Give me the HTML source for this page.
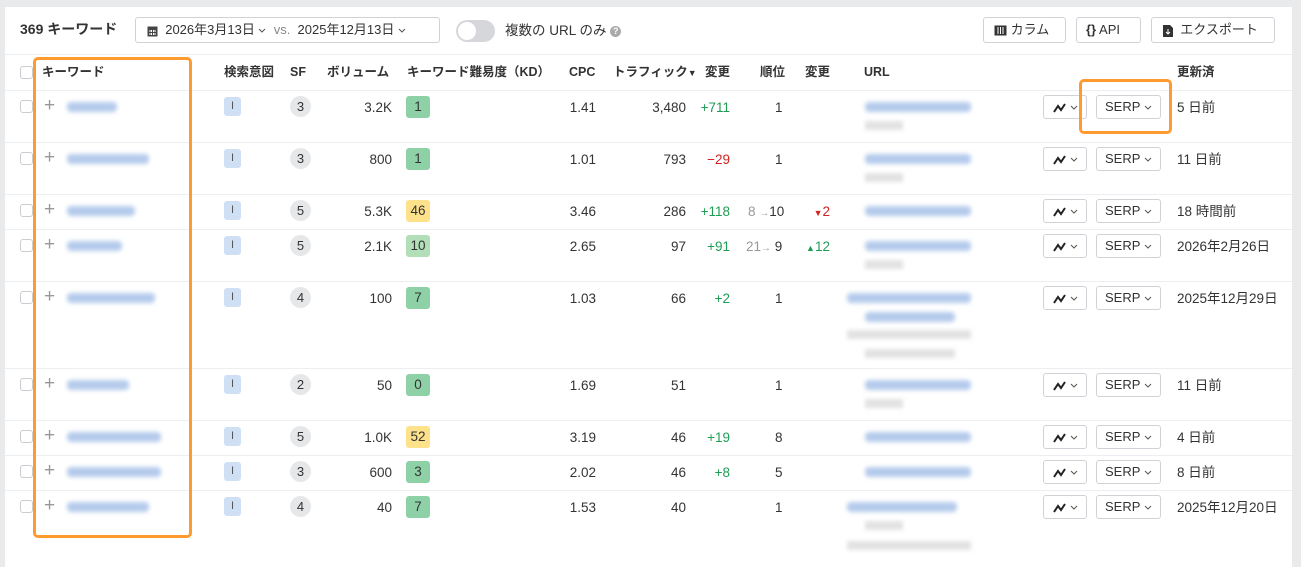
<!DOCTYPE html>
<html><head><meta charset="utf-8">
<style>
*{box-sizing:border-box;margin:0;padding:0}
body{width:1301px;height:550px;background:#e9eaec;font-family:"Liberation Sans","Noto Sans CJK JP",sans-serif;font-size:13px;color:#333;position:relative;overflow:hidden}
.panel{position:absolute;left:5px;top:7px;width:1287px;height:560px;background:#fff}
.a{position:absolute;white-space:nowrap;line-height:17px}
.btn{position:absolute;border:1px solid #cfd2d6;border-radius:3px;background:#fff;height:26px;line-height:24px;font-size:13px;color:#333;white-space:nowrap}
.hl{position:absolute;left:0;width:1287px;height:1px;background:#eceef0}
.th{position:absolute;top:64px;font-weight:bold;font-size:12.5px;color:#333;line-height:17px;white-space:nowrap}
.row{position:absolute;left:0;width:1301px}
.cb{position:absolute;left:20px;top:10px;width:13px;height:13px;border:1px solid #c9ccd0;border-radius:3px;background:#fff}
.plus{position:absolute;left:44px;top:1px;font-size:19px;color:#999;font-weight:300;line-height:30px}
.kw{position:absolute;left:67px;top:12px;height:10px;background:#b5cbec;filter:blur(2px);border-radius:4px}
.it{position:absolute;left:224px;top:7px;width:17px;height:19px;background:#cfe0f5;border-radius:3px;text-align:center;line-height:19px;font-size:11px;color:#555}
.sf{position:absolute;left:290px;top:6px;width:21px;height:21px;border-radius:50%;background:#e6e7e9;text-align:center;line-height:21px;font-size:13px}
.c{position:absolute;top:9px;line-height:17px;font-size:13.5px;white-space:nowrap}
.kd{position:absolute;left:406px;top:6px;height:22px;min-width:24px;padding:0 4px;border-radius:3px;text-align:center;line-height:22px;font-size:13.5px}
.g{background:#8fd1a6}.lg{background:#b3dfb8}.y{background:#fde18b}
.url{position:absolute;left:865px;top:12px;width:106px;height:10px;background:#b5cbec;filter:blur(2px);border-radius:4px}
.url2{position:absolute;left:865px;top:31px;width:38px;height:9px;background:#e2e2e2;filter:blur(2px)}
.ch{position:absolute;left:1043px;top:5px;width:44px;height:24px;border:1px solid #cfd2d6;border-radius:3px;line-height:22px;padding-left:9px}
.sp{position:absolute;left:1096px;top:5px;width:65px;height:24px;border:1px solid #cfd2d6;border-radius:3px;font-size:13px;line-height:22px;padding-left:8px;white-space:nowrap}
.up{position:absolute;left:1177px;top:9px;line-height:17px;font-size:13.5px;white-space:nowrap}
.grn{color:#1f9d55}.red{color:#d32222}
.ob{position:absolute;border:3px solid #ff9a2e;border-radius:5px}
svg{vertical-align:middle}
</style></head><body>
<div class="panel"></div>
<div class="a" style="left:20px;top:21px;font-weight:bold;font-size:14px">369 キーワード</div>
<div class="btn" style="left:135px;top:17px;width:305px;padding-left:11px"><svg width="11" height="12"><rect x="0.5" y="1.5" width="10" height="10" fill="#444"/><rect x="2" y="5" width="7" height="5" fill="#fff"/><path d="M3 5v5M5.5 5v5M8 5v5M2 7.5h7" stroke="#444"/></svg>&nbsp; 2026年3月13日 <svg width="8" height="5"><path d="M1 1l3 3 3-3" stroke="#555" fill="none"/></svg>&nbsp; <span style="color:#888">vs.</span>&nbsp; 2025年12月13日 <svg width="8" height="5"><path d="M1 1l3 3 3-3" stroke="#555" fill="none"/></svg></div>
<div class="a" style="left:456px;top:20px;width:39px;height:22px;border-radius:11px;background:#d5d7da"><div style="position:absolute;left:2px;top:2px;width:18px;height:18px;border-radius:50%;background:#fff"></div></div>
<div class="a" style="left:505px;top:22px;font-size:13.5px">複数の URL のみ <span style="display:inline-block;width:11px;height:11px;border-radius:50%;background:#aaa;color:#fff;font-size:9px;text-align:center;line-height:11px;font-weight:bold;vertical-align:1px">?</span></div>
<div class="btn" style="left:983px;top:17px;width:83px;padding-left:10px"><svg width="13" height="11"><rect x="0.5" y="0.5" width="12" height="10" fill="#333"/><path d="M4 2v7M6.5 2v7M9 2v7" stroke="#fff"/></svg> カラム</div>
<div class="btn" style="left:1076px;top:17px;width:65px;padding-left:9px"><b>{}</b> API</div>
<div class="btn" style="left:1151px;top:17px;width:124px;padding-left:11px"><svg width="10" height="12"><path d="M0 0h7l3 3v9H0z" fill="#333"/><path d="M5 4v5M3 7l2 2 2-2" stroke="#fff" fill="none"/></svg>&nbsp; エクスポート</div>
<div class="hl" style="left:5px;top:54px"></div>

<div class="a" style="left:20px;top:66px;width:13px;height:13px;border:1px solid #c9ccd0;border-radius:3px"></div>
<div class="th" style="left:42px">キーワード</div>
<div class="th" style="left:224px">検索意図</div>
<div class="th" style="left:290px">SF</div>
<div class="th" style="left:327px">ボリューム</div>
<div class="th" style="left:407px">キーワード難易度（KD）</div>
<div class="th" style="left:569px">CPC</div>
<div class="th" style="left:613px">トラフィック<span style="font-size:9px">▼</span></div>
<div class="th" style="left:705px">変更</div>
<div class="th" style="left:760px">順位</div>
<div class="th" style="left:805px">変更</div>
<div class="th" style="left:864px">URL</div>
<div class="th" style="left:1177px">更新済</div>
<div class="hl" style="left:5px;top:90px"></div>

<div class="row" style="top:90px"><div class="cb"></div><div class="plus">+</div><div class="kw" style="width:50px"></div><div class="it">I</div><div class="sf">3</div><div class="c" style="right:909px">3.2K</div><div class="kd g">1</div><div class="c" style="right:705px">1.41</div><div class="c" style="right:615px">3,480</div><div class="c grn" style="right:571px">+711</div><div class="c" style="left:775px">1</div><div class="url"></div><div class="url2"></div><div class="ch"><svg width="13" height="10"><path d="M1 9l4-6 3 4 4-6" stroke="#222" stroke-width="2" fill="none"/></svg> <svg width="8" height="5"><path d="M1 1l3 3 3-3" stroke="#555" fill="none"/></svg></div><div class="sp">SERP <svg width="8" height="5"><path d="M1 1l3 3 3-3" stroke="#555" fill="none"/></svg></div><div class="up">5 日前</div></div>
<div class="hl" style="top:142px;left:5px"></div>
<div class="row" style="top:142px"><div class="cb"></div><div class="plus">+</div><div class="kw" style="width:82px"></div><div class="it">I</div><div class="sf">3</div><div class="c" style="right:909px">800</div><div class="kd g">1</div><div class="c" style="right:705px">1.01</div><div class="c" style="right:615px">793</div><div class="c red" style="right:571px">−29</div><div class="c" style="left:775px">1</div><div class="url"></div><div class="url2"></div><div class="ch"><svg width="13" height="10"><path d="M1 9l4-6 3 4 4-6" stroke="#222" stroke-width="2" fill="none"/></svg> <svg width="8" height="5"><path d="M1 1l3 3 3-3" stroke="#555" fill="none"/></svg></div><div class="sp">SERP <svg width="8" height="5"><path d="M1 1l3 3 3-3" stroke="#555" fill="none"/></svg></div><div class="up">11 日前</div></div>
<div class="hl" style="top:194px;left:5px"></div>
<div class="row" style="top:194px"><div class="cb"></div><div class="plus">+</div><div class="kw" style="width:68px"></div><div class="it">I</div><div class="sf">5</div><div class="c" style="right:909px">5.3K</div><div class="kd y">46</div><div class="c" style="right:705px">3.46</div><div class="c" style="right:615px">286</div><div class="c grn" style="right:571px">+118</div><div class="c" style="left:748px"><span style="color:#999">8 <span style="font-size:10px">→</span></span>10</div><div class="c red" style="right:471px"><span style="font-size:9px">▼</span>2</div><div class="url"></div><div class="ch"><svg width="13" height="10"><path d="M1 9l4-6 3 4 4-6" stroke="#222" stroke-width="2" fill="none"/></svg> <svg width="8" height="5"><path d="M1 1l3 3 3-3" stroke="#555" fill="none"/></svg></div><div class="sp">SERP <svg width="8" height="5"><path d="M1 1l3 3 3-3" stroke="#555" fill="none"/></svg></div><div class="up">18 時間前</div></div>
<div class="hl" style="top:229px;left:5px"></div>
<div class="row" style="top:229px"><div class="cb"></div><div class="plus">+</div><div class="kw" style="width:55px"></div><div class="it">I</div><div class="sf">5</div><div class="c" style="right:909px">2.1K</div><div class="kd lg">10</div><div class="c" style="right:705px">2.65</div><div class="c" style="right:615px">97</div><div class="c grn" style="right:571px">+91</div><div class="c" style="left:746px"><span style="color:#999">21<span style="font-size:10px">→</span></span> 9</div><div class="c grn" style="right:471px"><span style="font-size:9px">▲</span>12</div><div class="url"></div><div class="url2"></div><div class="ch"><svg width="13" height="10"><path d="M1 9l4-6 3 4 4-6" stroke="#222" stroke-width="2" fill="none"/></svg> <svg width="8" height="5"><path d="M1 1l3 3 3-3" stroke="#555" fill="none"/></svg></div><div class="sp">SERP <svg width="8" height="5"><path d="M1 1l3 3 3-3" stroke="#555" fill="none"/></svg></div><div class="up">2026年2月26日</div></div>
<div class="hl" style="top:281px;left:5px"></div>
<div class="row" style="top:281px"><div class="cb"></div><div class="plus">+</div><div class="kw" style="width:88px"></div><div class="it">I</div><div class="sf">4</div><div class="c" style="right:909px">100</div><div class="kd g">7</div><div class="c" style="right:705px">1.03</div><div class="c" style="right:615px">66</div><div class="c grn" style="right:571px">+2</div><div class="c" style="left:775px">1</div><div class="url" style="left:847px;width:124px"></div><div class="url" style="left:865px;top:31px;width:90px"></div><div class="url2" style="left:847px;top:49px;width:124px"></div><div class="url2" style="left:865px;top:68px;width:90px"></div><div class="ch"><svg width="13" height="10"><path d="M1 9l4-6 3 4 4-6" stroke="#222" stroke-width="2" fill="none"/></svg> <svg width="8" height="5"><path d="M1 1l3 3 3-3" stroke="#555" fill="none"/></svg></div><div class="sp">SERP <svg width="8" height="5"><path d="M1 1l3 3 3-3" stroke="#555" fill="none"/></svg></div><div class="up">2025年12月29日</div></div>
<div class="hl" style="top:368px;left:5px"></div>
<div class="row" style="top:368px"><div class="cb"></div><div class="plus">+</div><div class="kw" style="width:62px"></div><div class="it">I</div><div class="sf">2</div><div class="c" style="right:909px">50</div><div class="kd g">0</div><div class="c" style="right:705px">1.69</div><div class="c" style="right:615px">51</div><div class="c" style="left:775px">1</div><div class="url"></div><div class="url2"></div><div class="ch"><svg width="13" height="10"><path d="M1 9l4-6 3 4 4-6" stroke="#222" stroke-width="2" fill="none"/></svg> <svg width="8" height="5"><path d="M1 1l3 3 3-3" stroke="#555" fill="none"/></svg></div><div class="sp">SERP <svg width="8" height="5"><path d="M1 1l3 3 3-3" stroke="#555" fill="none"/></svg></div><div class="up">11 日前</div></div>
<div class="hl" style="top:420px;left:5px"></div>
<div class="row" style="top:420px"><div class="cb"></div><div class="plus">+</div><div class="kw" style="width:94px"></div><div class="it">I</div><div class="sf">5</div><div class="c" style="right:909px">1.0K</div><div class="kd y">52</div><div class="c" style="right:705px">3.19</div><div class="c" style="right:615px">46</div><div class="c grn" style="right:571px">+19</div><div class="c" style="left:775px">8</div><div class="url"></div><div class="ch"><svg width="13" height="10"><path d="M1 9l4-6 3 4 4-6" stroke="#222" stroke-width="2" fill="none"/></svg> <svg width="8" height="5"><path d="M1 1l3 3 3-3" stroke="#555" fill="none"/></svg></div><div class="sp">SERP <svg width="8" height="5"><path d="M1 1l3 3 3-3" stroke="#555" fill="none"/></svg></div><div class="up">4 日前</div></div>
<div class="hl" style="top:455px;left:5px"></div>
<div class="row" style="top:455px"><div class="cb"></div><div class="plus">+</div><div class="kw" style="width:94px"></div><div class="it">I</div><div class="sf">3</div><div class="c" style="right:909px">600</div><div class="kd g">3</div><div class="c" style="right:705px">2.02</div><div class="c" style="right:615px">46</div><div class="c grn" style="right:571px">+8</div><div class="c" style="left:775px">5</div><div class="url"></div><div class="ch"><svg width="13" height="10"><path d="M1 9l4-6 3 4 4-6" stroke="#222" stroke-width="2" fill="none"/></svg> <svg width="8" height="5"><path d="M1 1l3 3 3-3" stroke="#555" fill="none"/></svg></div><div class="sp">SERP <svg width="8" height="5"><path d="M1 1l3 3 3-3" stroke="#555" fill="none"/></svg></div><div class="up">8 日前</div></div>
<div class="hl" style="top:490px;left:5px"></div>
<div class="row" style="top:490px"><div class="cb"></div><div class="plus">+</div><div class="kw" style="width:82px"></div><div class="it">I</div><div class="sf">4</div><div class="c" style="right:909px">40</div><div class="kd g">7</div><div class="c" style="right:705px">1.53</div><div class="c" style="right:615px">40</div><div class="c" style="left:775px">1</div><div class="url" style="left:847px;width:110px"></div><div class="url2" style="left:865px;top:31px"></div><div class="url2" style="left:847px;top:51px;width:124px"></div><div class="ch"><svg width="13" height="10"><path d="M1 9l4-6 3 4 4-6" stroke="#222" stroke-width="2" fill="none"/></svg> <svg width="8" height="5"><path d="M1 1l3 3 3-3" stroke="#555" fill="none"/></svg></div><div class="sp">SERP <svg width="8" height="5"><path d="M1 1l3 3 3-3" stroke="#555" fill="none"/></svg></div><div class="up">2025年12月20日</div></div>

<div class="ob" style="left:33px;top:57px;width:159px;height:481px"></div>
<div class="ob" style="left:1079px;top:79px;width:93px;height:55px"></div>
</body></html>
